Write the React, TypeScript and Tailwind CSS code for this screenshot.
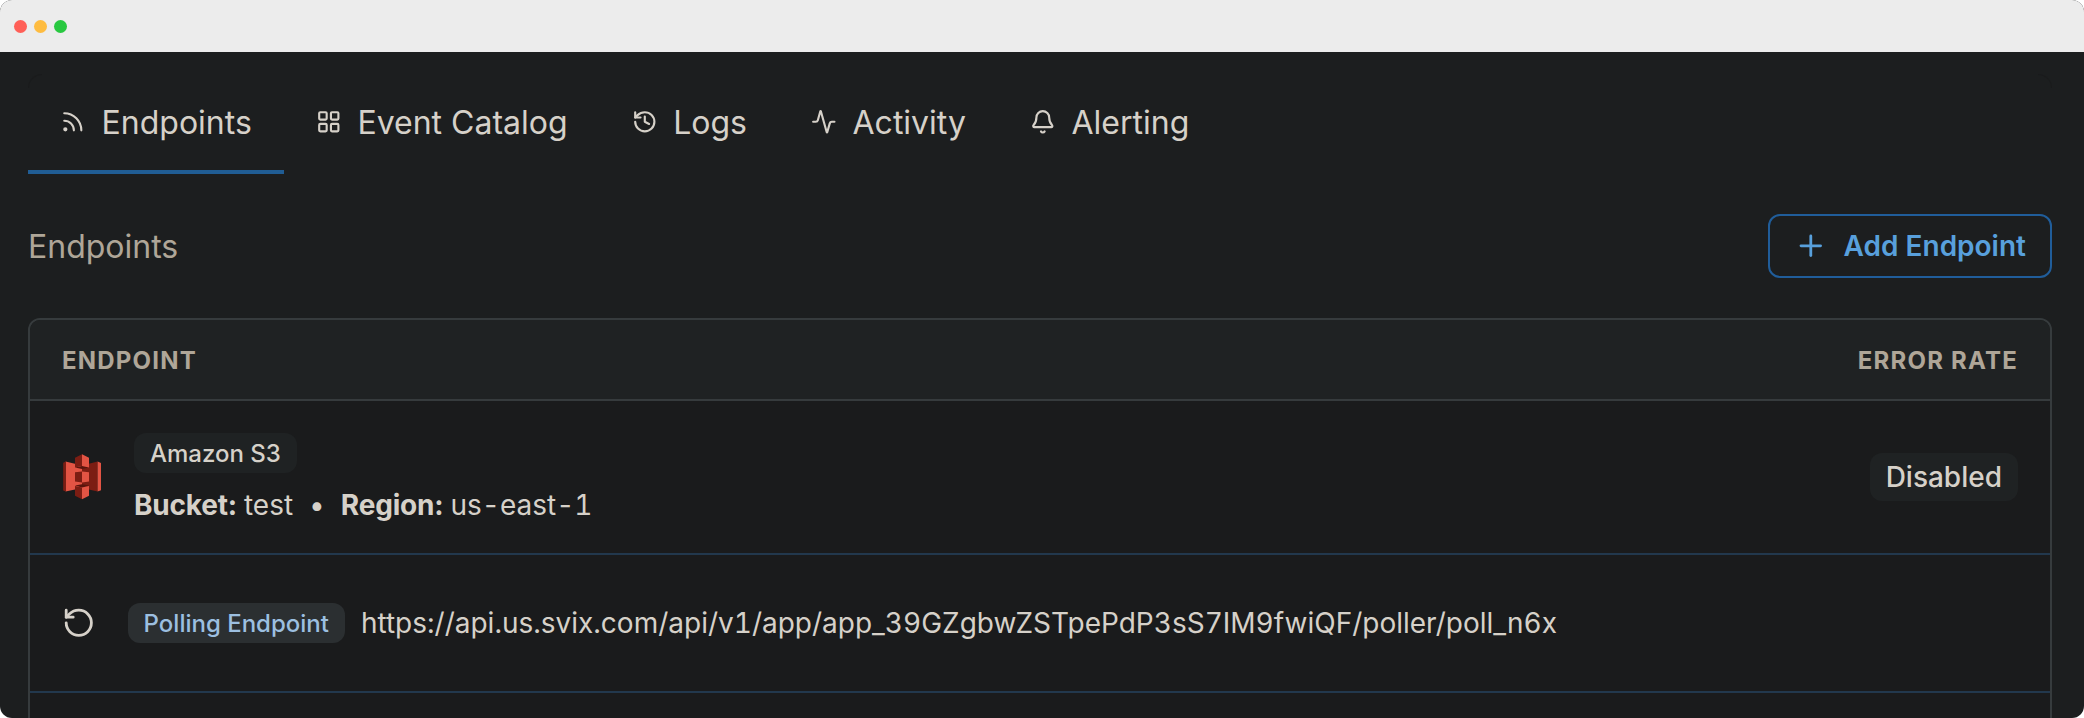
import { Activity, Bell, History, LayoutGrid, Plus, RotateCcw, Rss } from "lucide-react";

const tabs = [
  { name: "Endpoints", Icon: Rss, active: true },
  { name: "Event Catalog", Icon: LayoutGrid },
  { name: "Logs", Icon: History },
  { name: "Activity", Icon: Activity },
  { name: "Alerting", Icon: Bell },
];

const TitleBar = () => {
  return (
    <div className="flex h-[52px] shrink-0 items-center gap-[7px] bg-[#ececec] pl-3.5">
      <span className="size-[13px] rounded-full bg-[#ff5f57]" />
      <span className="size-[13px] rounded-full bg-[#febc40]" />
      <span className="size-[13px] rounded-full bg-[#28c840]" />
    </div>
  );
};

const S3Logo = () => {
  return (
    <svg width="38" height="46" viewBox="0 0 38 46" className="ml-px">
      <path d="M2.6 7.6 L19 11.5 V34 L2.6 37.6 Z" fill="#e25444" />
      <path d="M0.2 8.8 L2.9 7.6 V37.6 L0.2 36.4 Z" fill="#7b1d13" />
      <path d="M34.6 7.6 L19 11.5 V34 L34.6 37.6 Z" fill="#7b1d13" />
      <path d="M34.6 7.6 L38 9 V36.2 L34.6 37.6 Z" fill="#e25444" />
      <path d="M12 13.6 L19 15 L26 13.6 L19 12 Z" fill="#58150d" />
      <path d="M12 31.6 L19 30.2 L26 31.6 L19 33.4 Z" fill="#58150d" />
      <path d="M12 3.7 L19 0.3 V12 L12 13.6 Z" fill="#7b1d13" />
      <path d="M19 0.3 L26 3.7 V13.6 L19 12 Z" fill="#e25444" />
      <path d="M12 18.2 L19 17.4 V28.6 L12 27.6 Z" fill="#7b1d13" />
      <path d="M19 17.4 L26 18.2 V27.6 L19 28.6 Z" fill="#e25444" />
      <path d="M12 32 L19 33.4 V45.2 L12 41.8 Z" fill="#7b1d13" />
      <path d="M19 33.4 L26 32 V41.8 L19 45.2 Z" fill="#e25444" />
    </svg>
  );
};

const Tabs = () => {
  return (
    <div className="flex">
      {tabs.map(({ name, Icon, active }) => (
        <div
          key={name}
          className={
            active
              ? "flex h-[100px] items-center border-b-4 border-[#205d94] px-8 text-[32px]"
              : "flex h-[100px] items-center border-b-4 border-transparent px-8 text-[32px]"
          }
        >
          <Icon size={25.6} />
          <span className="ml-4 pt-0.5">{name}</span>
        </div>
      ))}
    </div>
  );
};

const App = () => {
  return (
    <div className="h-[718px] overflow-hidden bg-white font-['Inter',sans-serif] text-[#d6d1c9]">
      <div className="flex h-full flex-col overflow-hidden rounded-xl bg-[#1c1e1f]">
        <TitleBar />
        <div className="relative px-7 pr-8 pt-[22px]">
          <span className="absolute left-7 top-[22px] size-3.5 rounded-tl-full border-l border-t border-[#1a1b1c]" />
          <span className="absolute right-8 top-[22px] size-3.5 rounded-tr-full border-r border-t border-[#1a1b1c]" />
          <Tabs />
          <div className="mt-10 flex h-16 items-center justify-between">
            <h1 className="pt-0.5 text-[32px] text-[#afa698]">Endpoints</h1>
            <button className="flex h-16 w-[284px] items-center rounded-xl border-2 border-[#205d9a] pl-6 text-[28px] font-semibold text-[#58a0dc]">
              <Plus size={33.6} />
              <span className="ml-4 whitespace-nowrap">Add Endpoint</span>
            </button>
          </div>

          <div className="mt-10 h-[420px] overflow-hidden rounded-xl border-2 border-[#363b3d] bg-[#1a1b1c]">
            <div className="flex h-[81px] items-center justify-between border-b-2 border-[#363b3d] bg-[#1f2223] px-8 pt-0.5 text-2xl font-bold tracking-wider text-[#afa698]">
              <span>ENDPOINT</span>
              <span>ERROR RATE</span>
            </div>

            <div className="flex h-[154px] items-center border-b-2 border-[#22384d] px-8">
              <S3Logo />
              <div className="ml-[33px] flex flex-col items-start gap-3 pt-1">
                <span className="flex h-10 items-center rounded-xl bg-[#1f2223] px-4 pt-0.5 text-2xl font-medium">
                  Amazon S3
                </span>
                <div className="flex items-center text-[28px] leading-10">
                  <b className="mr-[7px] font-bold tracking-[-0.2px]">Bucket:</b>
                  <span>test</span>
                  <span className="mx-4">•</span>
                  <b className="mr-[7px] font-bold tracking-[-0.2px]">Region:</b>
                  <span className="tabular-nums">us-east-1</span>
                </div>
              </div>
              <span className="ml-auto flex h-12 items-center rounded-xl bg-[#1f2223] px-4 text-[28px] font-medium">
                Disabled
              </span>
            </div>

            <div className="flex h-[138px] items-center border-b-2 border-[#22384d] px-8">
              <RotateCcw size={33.6} />
              <span className="ml-8 flex h-10 items-center rounded-xl bg-[#2b2f31] px-4 pt-0.5 text-2xl font-medium text-[#9cbfe0]">
                Polling Endpoint
              </span>
              <span className="ml-4 text-[28px] tabular-nums">
                https://api.us.svix.com/api/v1/app/app_39GZgbwZSTpePdP3sS7IM9fwiQF/poller/poll_n6x
              </span>
            </div>
          </div>
        </div>
      </div>
    </div>
  );
};

export default App;
